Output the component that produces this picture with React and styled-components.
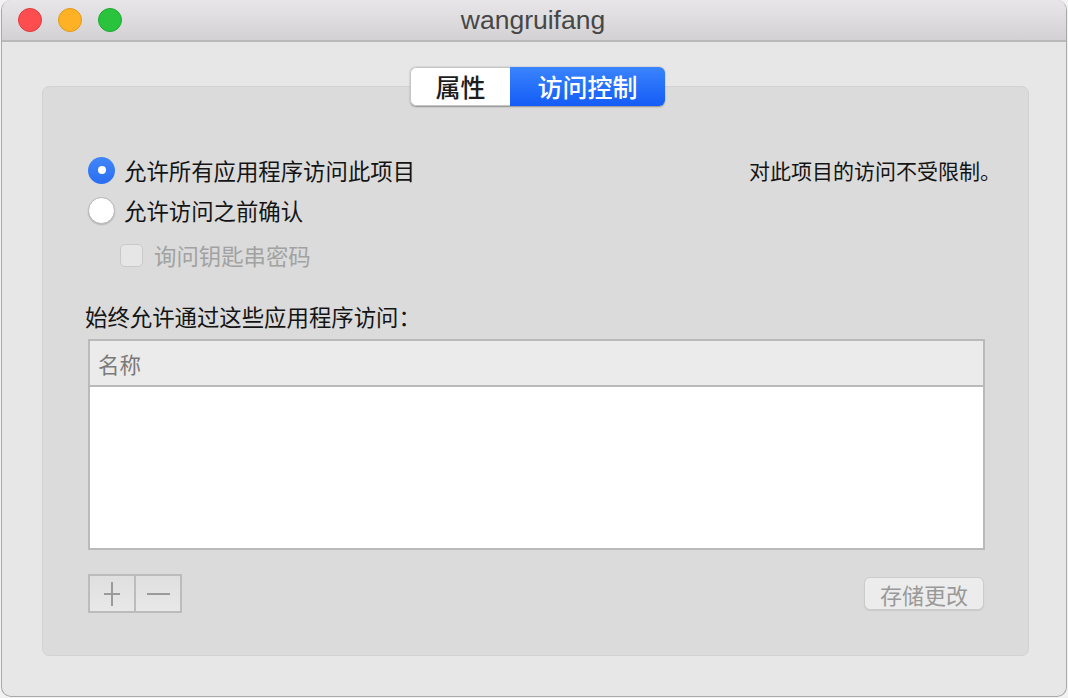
import React from "react";
import styled, { createGlobalStyle } from "styled-components";

const GlobalStyle = createGlobalStyle`
  html, body {
    margin: 0;
    padding: 0;
    background: #f2f2f2;
  }
  body {
    font-family: "Noto Sans CJK SC", "Noto Sans", sans-serif;
    -webkit-font-smoothing: antialiased;
  }
`;

const Window = styled.div`
  box-sizing: border-box;
  margin-left: 1px;
  width: 1066px;
  height: 697px;
  background: #e7e7e7;
  border: 1px solid #a9a9a9;
  border-top: none;
  border-radius: 10px;
  overflow: hidden;
  display: flex;
  flex-direction: column;
`;

const TitleBar = styled.div`
  position: relative;
  flex: 0 0 auto;
  height: 40px;
  background: linear-gradient(#e8e6e8, #d3d1d3);
  border-bottom: 2px solid #b9b9b9;
  display: flex;
  align-items: center;
  justify-content: center;
`;

const Lights = styled.div`
  position: absolute;
  left: 16px;
  top: 8px;
  display: flex;
  gap: 16px;
`;

const Light = styled.span`
  width: 22px;
  height: 22px;
  border-radius: 50%;
  background: ${(p) => p.$bg};
  border: 1px solid ${(p) => p.$edge};
`;

const Title = styled.div`
  font-family: "Liberation Sans", Arial, sans-serif;
  font-size: 26.5px;
  color: #474747;
  margin-left: -2px;
`;

const Body = styled.div`
  flex: 1;
  display: flex;
  flex-direction: column;
  align-items: center;
  padding: 25px 37px 40px 40px;
`;

const Segmented = styled.div`
  position: relative;
  z-index: 1;
  display: flex;
  height: 39px;
  margin-bottom: -20px;
  margin-left: 4px;
  border-radius: 6px;
  box-shadow: 0 0.5px 1.5px rgba(0, 0, 0, 0.35);
  overflow: hidden;
`;

const Segment = styled.div`
  box-sizing: border-box;
  width: ${(p) => p.$w}px;
  display: flex;
  align-items: center;
  justify-content: center;
  font-size: 25px;
  font-weight: 500;
  line-height: 1;
  color: ${(p) => (p.$active ? "#ffffff" : "#1d1d1d")};
  background: ${(p) =>
    p.$active ? "linear-gradient(#3a84fd, #145cf6)" : "#ffffff"};
  border: ${(p) => (p.$active ? "none" : "1px solid #c6c6c6")};
  border-right: none;
  border-radius: ${(p) => (p.$active ? "0" : "6px 0 0 6px")};
`;

const Panel = styled.div`
  box-sizing: border-box;
  align-self: stretch;
  flex: 1;
  background: #dbdbdb;
  border: 1px solid #d2d2d2;
  border-radius: 7px;
  padding: 69px 43px 0 45px;
  display: flex;
  flex-direction: column;
`;

const OptionRow = styled.div`
  display: flex;
  align-items: center;
  justify-content: space-between;
  height: 28px;
  margin-bottom: ${(p) => p.$mb || 0}px;
`;

const Option = styled.label`
  display: flex;
  align-items: center;
  gap: 9px;
  font-size: 22.4px;
  color: ${(p) => (p.$disabled ? "#a2a2a2" : "#141414")};
  padding-left: ${(p) => p.$indent || 0}px;
  line-height: 1;
`;

const Radio = styled.span`
  box-sizing: border-box;
  width: 27px;
  height: 27px;
  border-radius: 50%;
  display: flex;
  align-items: center;
  justify-content: center;
  background: ${(p) => (p.$on ? "linear-gradient(#4186f8, #2a6ef3)" : "#ffffff")};
  border: ${(p) => (p.$on ? "none" : "1px solid #b6b6b6")};
  box-shadow: ${(p) => (p.$on ? "none" : "0 1px 1.5px rgba(0,0,0,0.18)")};
  &::after {
    content: "";
    display: ${(p) => (p.$on ? "block" : "none")};
    width: 8px;
    height: 8px;
    border-radius: 50%;
    background: #fff;
  }
`;

const Checkbox = styled.span`
  box-sizing: border-box;
  width: 23px;
  height: 23px;
  border-radius: 5px;
  background: #e6e6e6;
  border: 1px solid #c9c9c9;
  margin-right: 2px;
`;

const Note = styled.div`
  font-size: 21px;
  color: #141414;
  margin-right: -16px;
`;

const ListLabel = styled.div`
  font-size: 22.4px;
  color: #141414;
  line-height: 28px;
  margin: 0 0 9px -3px;
`;

const Table = styled.div`
  display: flex;
  flex-direction: column;
  height: 211px;
  box-sizing: border-box;
  border: 2px solid #bababa;
  background: #ffffff;
`;

const TableHead = styled.div`
  height: 46px;
  box-sizing: border-box;
  background: #ebebeb;
  border-bottom: 2px solid #bababa;
  display: flex;
  align-items: center;
  padding-left: 8px;
  font-size: 21.5px;
  color: #7a7a7a;
`;

const Footer = styled.div`
  display: flex;
  align-items: center;
  justify-content: space-between;
  margin-top: 24px;
`;

const ButtonGroup = styled.div`
  display: flex;
`;

const SquareButton = styled.div`
  box-sizing: border-box;
  width: ${(p) => p.$w}px;
  height: 39px;
  display: flex;
  align-items: center;
  justify-content: center;
  background: linear-gradient(#dfdfdf, #e8e8e8);
  border: 2px solid #bcbcbc;
  border-left: ${(p) => (p.$first ? "2px solid #bcbcbc" : "none")};
`;

const SaveButton = styled.div`
  box-sizing: border-box;
  width: 120px;
  height: 33px;
  margin-right: 1px;
  display: flex;
  align-items: center;
  justify-content: center;
  border-radius: 6px;
  background: #ececec;
  border: 1px solid #cbcbcb;
  box-shadow: 0 1px 1px rgba(0, 0, 0, 0.08);
  font-size: 22px;
  color: #999999;
  line-height: 1;
`;

const PlusIcon = () => (
  <svg width="16" height="24" viewBox="0 0 16 24">
    <path d="M8 0v24M0 12h16" stroke="#9a9a9a" strokeWidth="2" fill="none" />
  </svg>
);

const MinusIcon = () => (
  <svg width="23" height="4" viewBox="0 0 23 4">
    <path d="M0 2h23" stroke="#9a9a9a" strokeWidth="2" fill="none" />
  </svg>
);

export default function App() {
  return (
    <>
      <GlobalStyle />
      <Window>
        <TitleBar>
          <Lights>
            <Light $bg="#fe4d4e" $edge="#de3c3e" />
            <Light $bg="#feb124" $edge="#df9a1b" />
            <Light $bg="#29c33e" $edge="#1ea92f" />
          </Lights>
          <Title>wangruifang</Title>
        </TitleBar>
        <Body>
          <Segmented>
            <Segment $w={100}>属性</Segment>
            <Segment $w={155} $active>
              访问控制
            </Segment>
          </Segmented>
          <Panel>
            <OptionRow $mb={12}>
              <Option>
                <Radio $on />
                允许所有应用程序访问此项目
              </Option>
              <Note>对此项目的访问不受限制。</Note>
            </OptionRow>
            <OptionRow $mb={17}>
              <Option>
                <Radio />
                允许访问之前确认
              </Option>
            </OptionRow>
            <OptionRow $mb={33}>
              <Option $indent={32} $disabled>
                <Checkbox />
                询问钥匙串密码
              </Option>
            </OptionRow>
            <ListLabel>始终允许通过这些应用程序访问：</ListLabel>
            <Table>
              <TableHead>名称</TableHead>
            </Table>
            <Footer>
              <ButtonGroup>
                <SquareButton $w={48} $first>
                  <PlusIcon />
                </SquareButton>
                <SquareButton $w={46}>
                  <MinusIcon />
                </SquareButton>
              </ButtonGroup>
              <SaveButton>存储更改</SaveButton>
            </Footer>
          </Panel>
        </Body>
      </Window>
    </>
  );
}
